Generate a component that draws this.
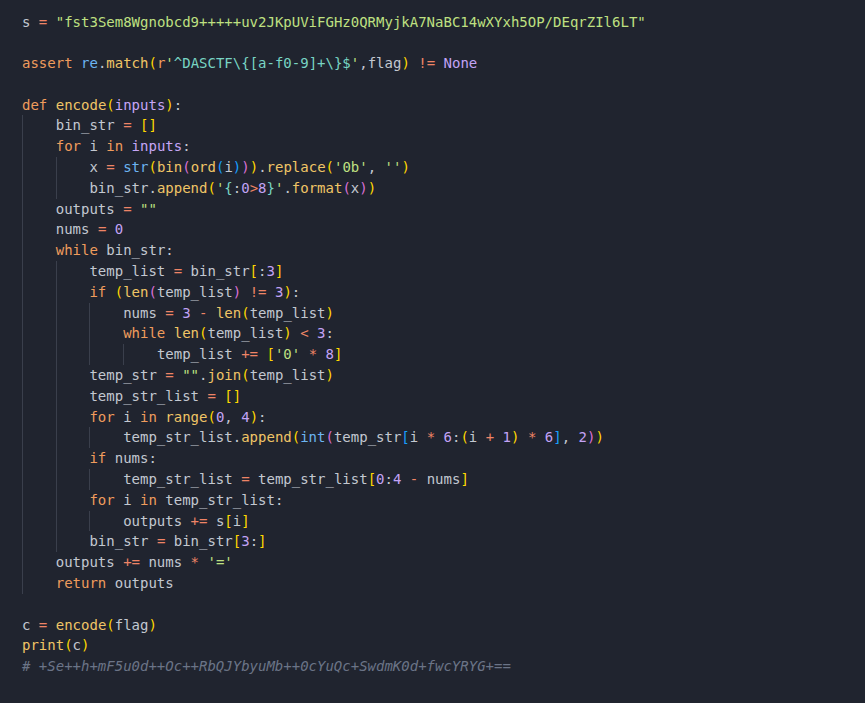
import React from "react";

type Tok = [string, string];

const C: Record<string, string> = {
  d: "text-[#c3c8d1]",
  k: "text-[#ef9c5d]",
  o: "text-[#ef8466]",
  s: "text-[#bfe081]",
  f: "text-[#f0c566]",
  b: "text-[#6cb4f2]",
  p: "text-[#c6a6f6]",
  n: "text-[#c3a3f6]",
  c: "text-[#6b7487] italic",
  t: "text-[#78d4c4]",
  y: "text-[#ffd700]",
  m: "text-[#da70d6]",
  u: "text-[#179fff]",
};

const lines: { i: number; t: Tok[] }[] = [
  { i: 0, t: [["d", "s "], ["o", "="], ["d", " "], ["s", '"fst3Sem8Wgnobcd9+++++uv2JKpUViFGHz0QRMyjkA7NaBC14wXYxh5OP/DEqrZIl6LT"']] },
  { i: 0, t: [] },
  { i: 0, t: [["k", "assert"], ["d", " "], ["b", "re"], ["d", "."], ["f", "match"], ["y", "("], ["k", "r"], ["s", "'"], ["t", "^DASCTF\\{[a-f0-9]+\\}$"], ["s", "'"], ["d", ",flag"], ["y", ")"], ["d", " "], ["o", "!="], ["d", " "], ["n", "None"]] },
  { i: 0, t: [] },
  { i: 0, t: [["k", "def"], ["d", " "], ["f", "encode"], ["y", "("], ["p", "inputs"], ["y", ")"], ["d", ":"]] },
  { i: 1, t: [["d", "bin_str "], ["o", "="], ["d", " "], ["y", "[]"]] },
  { i: 1, t: [["k", "for"], ["d", " i "], ["k", "in"], ["d", " "], ["p", "inputs"], ["d", ":"]] },
  { i: 2, t: [["d", "x "], ["o", "="], ["d", " "], ["b", "str"], ["y", "("], ["f", "bin"], ["m", "("], ["f", "ord"], ["u", "("], ["d", "i"], ["u", ")"], ["m", ")"], ["y", ")"], ["d", "."], ["f", "replace"], ["y", "("], ["s", "'0b'"], ["d", ", "], ["s", "''"], ["y", ")"]] },
  { i: 2, t: [["d", "bin_str."], ["f", "append"], ["y", "("], ["s", "'"], ["t", "{"], ["d", ":"], ["n", "0"], ["o", ">"], ["n", "8"], ["t", "}"], ["s", "'"], ["d", "."], ["f", "format"], ["m", "("], ["d", "x"], ["m", ")"], ["y", ")"]] },
  { i: 1, t: [["d", "outputs "], ["o", "="], ["d", " "], ["s", '""']] },
  { i: 1, t: [["d", "nums "], ["o", "="], ["d", " "], ["n", "0"]] },
  { i: 1, t: [["k", "while"], ["d", " bin_str:"]] },
  { i: 2, t: [["d", "temp_list "], ["o", "="], ["d", " bin_str"], ["y", "["], ["d", ":"], ["n", "3"], ["y", "]"]] },
  { i: 2, t: [["k", "if"], ["d", " "], ["y", "("], ["f", "len"], ["m", "("], ["d", "temp_list"], ["m", ")"], ["d", " "], ["o", "!="], ["d", " "], ["n", "3"], ["y", ")"], ["d", ":"]] },
  { i: 3, t: [["d", "nums "], ["o", "="], ["d", " "], ["n", "3"], ["d", " "], ["o", "-"], ["d", " "], ["f", "len"], ["y", "("], ["d", "temp_list"], ["y", ")"]] },
  { i: 3, t: [["k", "while"], ["d", " "], ["f", "len"], ["y", "("], ["d", "temp_list"], ["y", ")"], ["d", " "], ["o", "<"], ["d", " "], ["n", "3"], ["d", ":"]] },
  { i: 4, t: [["d", "temp_list "], ["o", "+="], ["d", " "], ["y", "["], ["s", "'0'"], ["d", " "], ["o", "*"], ["d", " "], ["n", "8"], ["y", "]"]] },
  { i: 2, t: [["d", "temp_str "], ["o", "="], ["d", " "], ["s", '""'], ["d", "."], ["f", "join"], ["y", "("], ["d", "temp_list"], ["y", ")"]] },
  { i: 2, t: [["d", "temp_str_list "], ["o", "="], ["d", " "], ["y", "[]"]] },
  { i: 2, t: [["k", "for"], ["d", " i "], ["k", "in"], ["d", " "], ["f", "range"], ["y", "("], ["n", "0"], ["d", ", "], ["n", "4"], ["y", ")"], ["d", ":"]] },
  { i: 3, t: [["d", "temp_str_list."], ["f", "append"], ["y", "("], ["b", "int"], ["m", "("], ["d", "temp_str"], ["u", "["], ["d", "i "], ["o", "*"], ["d", " "], ["n", "6"], ["d", ":"], ["y", "("], ["d", "i "], ["o", "+"], ["d", " "], ["n", "1"], ["y", ")"], ["d", " "], ["o", "*"], ["d", " "], ["n", "6"], ["u", "]"], ["d", ", "], ["n", "2"], ["m", ")"], ["y", ")"]] },
  { i: 2, t: [["k", "if"], ["d", " nums:"]] },
  { i: 3, t: [["d", "temp_str_list "], ["o", "="], ["d", " temp_str_list"], ["y", "["], ["n", "0"], ["d", ":"], ["n", "4"], ["d", " "], ["o", "-"], ["d", " nums"], ["y", "]"]] },
  { i: 2, t: [["k", "for"], ["d", " i "], ["k", "in"], ["d", " temp_str_list:"]] },
  { i: 3, t: [["d", "outputs "], ["o", "+="], ["d", " s"], ["y", "["], ["d", "i"], ["y", "]"]] },
  { i: 2, t: [["d", "bin_str "], ["o", "="], ["d", " bin_str"], ["y", "["], ["n", "3"], ["d", ":"], ["y", "]"]] },
  { i: 1, t: [["d", "outputs "], ["o", "+="], ["d", " nums "], ["o", "*"], ["d", " "], ["s", "'='"]] },
  { i: 1, t: [["k", "return"], ["d", " outputs"]] },
  { i: 0, t: [] },
  { i: 0, t: [["d", "c "], ["o", "="], ["d", " "], ["f", "encode"], ["y", "("], ["d", "flag"], ["y", ")"]] },
  { i: 0, t: [["f", "print"], ["y", "("], ["d", "c"], ["y", ")"]] },
  { i: 0, t: [["c", "# +Se++h+mF5u0d++Oc++RbQJYbyuMb++0cYuQc+SwdmK0d+fwcYRYG+=="]] },
];

export default function App() {
  return (
    <div className="w-[865px] h-[703px] bg-[#20242f] overflow-hidden pl-[22px] pt-[11.5px] font-['DejaVu_Sans_Mono',monospace] text-[14px] leading-[20.8px] whitespace-pre">
      {lines.map((l, idx) => (
        <div key={idx} className="h-[20.8px]">
          {Array.from({ length: l.i }).map((_, g) => (
            <span key={g} className="inline-block shadow-[inset_1px_0_0_#3a3f4c]">{"    "}</span>
          ))}
          {l.t.map(([c, txt], j) => (
            <span key={j} className={C[c]}>{txt}</span>
          ))}
        </div>
      ))}
    </div>
  );
}
